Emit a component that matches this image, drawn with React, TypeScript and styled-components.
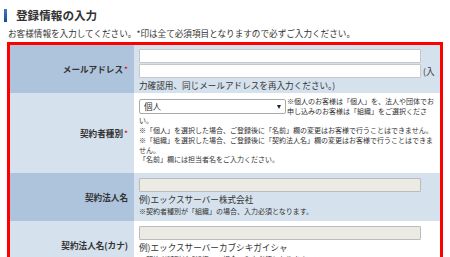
import styled, { createGlobalStyle } from "styled-components";

const GlobalStyle = createGlobalStyle`
  html, body {
    margin: 0;
    padding: 0;
    background: #ffffff;
  }
  body {
    font-family: "Noto Sans CJK JP", "Noto Sans", sans-serif;
    color: #333333;
  }
`;

const Page = styled.div`
  width: 450px;
  height: 257px;
  overflow: hidden;
`;

const Heading = styled.h2`
  display: flex;
  align-items: center;
  margin: 9px 0 0 4px;
  height: 13px;
  font-size: 11.6px;
  font-weight: bold;
  line-height: 13px;
  color: #333333;

  &:before {
    content: "";
    width: 3px;
    height: 13px;
    margin-right: 9px;
    background: linear-gradient(#3f7cc6, #134a98);
  }
`;

const Lead = styled.p`
  margin: 5px 0 0 8px;
  font-size: 8.6px;
  line-height: 12px;
  white-space: nowrap;
`;

const FormBox = styled.div`
  box-sizing: border-box;
  width: 436px;
  margin: 3px 0 0 7px;
  border: 3px solid #ff0000;
`;

const Row = styled.div`
  display: grid;
  grid-template-columns: 124px 1fr;
`;

const Label = styled.div<{ $alt?: boolean }>`
  display: flex;
  align-items: center;
  justify-content: flex-end;
  padding-right: 6px;
  font-size: 8.6px;
  font-weight: bold;
  white-space: nowrap;
  background: ${({ $alt }) => ($alt ? "#d5e1ed" : "#aec4dc")};
`;

const Required = styled.span`
  color: #e60012;
  font-weight: normal;
  margin-left: 1px;
`;

const Value = styled.div<{ $alt?: boolean; $pad: string }>`
  padding: ${({ $pad }) => $pad};
  background: ${({ $alt }) => ($alt ? "#ffffff" : "#d5e1ed")};
`;

const TextInput = styled.input<{ $inline?: boolean; $muted?: boolean }>`
  display: ${({ $inline }) => ($inline ? "inline-block" : "block")};
  vertical-align: top;
  box-sizing: border-box;
  width: 282px;
  height: 14px;
  margin: ${({ $inline }) => ($inline ? "0 2px 0 0" : "0 0 1px 0")};
  padding: 0 3px;
  border: 1px solid ${({ $muted }) => ($muted ? "#bcbcbc" : "#c7c7c7")};
  border-radius: 1px;
  background: ${({ $muted }) => ($muted ? "#ebebe4" : "#ffffff")};
  font: inherit;
  font-size: 8.6px;
  outline: none;
`;

const ConfirmLine = styled.div`
  font-size: 8.6px;
  line-height: 14px;
  white-space: nowrap;
`;

const Notes = styled.div`
  font-size: 7px;
  line-height: 9.7px;
  white-space: nowrap;
`;

const SelectBox = styled.div`
  float: left;
  box-sizing: border-box;
  display: flex;
  align-items: center;
  justify-content: space-between;
  width: 147px;
  height: 15px;
  margin: 2px 1px 2px 0;
  padding: 0 4px 0 4px;
  border: 1px solid #a9a9a9;
  border-radius: 2px;
  background: #ffffff;
  font-size: 8.6px;
  line-height: 13px;
`;

const Caret = styled.span`
  width: 0;
  height: 0;
  border-left: 2.5px solid transparent;
  border-right: 2.5px solid transparent;
  border-top: 4px solid #222222;
`;

const Example = styled.div`
  font-size: 8.6px;
  line-height: 13px;
`;

const Hint = styled.div`
  font-size: 7px;
  line-height: 10px;
`;

const App = () => {
  return (
    <Page>
      <GlobalStyle />
      <Heading>登録情報の入力</Heading>
      <Lead>
        お客様情報を入力してください。*印は全て必須項目となりますので必ずご入力ください。
      </Lead>
      <FormBox>
        <Row>
          <Label>
            メールアドレス<Required>*</Required>
          </Label>
          <Value $pad="4px 4px 1px 5px">
            <TextInput type="text" />
            <ConfirmLine>
              <TextInput type="text" $inline />
              (入
              <br />
              力確認用、同じメールアドレスを再入力ください。)
            </ConfirmLine>
          </Value>
        </Row>
        <Row>
          <Label $alt>
            契約者種別<Required>*</Required>
          </Label>
          <Value $alt $pad="4px 4px 8px 5px">
            <SelectBox>
              <span>個人</span>
              <Caret />
            </SelectBox>
            <Notes>
              ※個人のお客様は「個人」を、法人や団体でお
              <br />
              申し込みのお客様は「組織」をご選択くださ
              <br />
              い。
              <br />
              ※「個人」を選択した場合、ご登録後に「名前」欄の変更はお客様で行うことはできません。
              <br />
              ※「組織」を選択した場合、ご登録後に「契約法人名」欄の変更はお客様で行うことはできま
              <br />
              せん。
              <br />
              「名前」欄には担当者名をご入力ください。
            </Notes>
          </Value>
        </Row>
        <Row>
          <Label>契約法人名</Label>
          <Value $pad="5px 4px 5px 5px">
            <TextInput type="text" $muted />
            <Example>例)エックスサーバー株式会社</Example>
            <Hint>※契約者種別が「組織」の場合、入力必須となります。</Hint>
          </Value>
        </Row>
        <Row>
          <Label $alt>契約法人名(カナ)</Label>
          <Value $alt $pad="5px 4px 5px 5px">
            <TextInput type="text" $muted />
            <Example>例)エックスサーバーカブシキガイシャ</Example>
            <Hint>※契約者種別が「組織」の場合、入力必須となります。</Hint>
          </Value>
        </Row>
      </FormBox>
    </Page>
  );
};

export default App;
